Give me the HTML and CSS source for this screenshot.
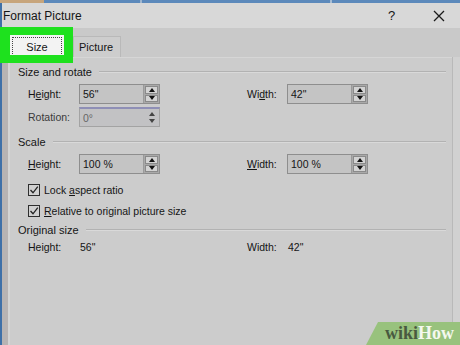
FILE: index.html
```html
<!DOCTYPE html>
<html lang="en">
<head>
<meta charset="UTF-8" />
<title>Format Picture</title>
<link rel="stylesheet" href="styles.css">
</head>
<body>
<div class="screen">
  <div class="backdrop-strip"></div>
  <div class="window">
    <div class="titlebar">
      <span class="title">Format Picture</span>
      <span class="help">?</span>
      <svg class="close" width="12" height="12" viewBox="0 0 12 12">
        <path d="M1 1 L11 11 M11 1 L1 11" stroke="#1a1a1a" stroke-width="1.3" fill="none" />
      </svg>
    </div>

    <div class="tabs">
      <div class="tab active"><span>Size</span></div>
      <div class="tab">Picture</div>
    </div>

    <div class="main">
      <div class="gutter-left"></div>
      <div class="panel">

        <div class="section-head">Size and rotate</div>
        <div class="row">
          <label>H<u>e</u>ight:</label>
          <div class="spin"><div class="spin-text">56"</div><div class="spin-btns"><i class="up"></i><i class="down"></i></div></div>
          <span></span>
          <label>Wi<u>d</u>th:</label>
          <div class="spin"><div class="spin-text">42"</div><div class="spin-btns"><i class="up"></i><i class="down"></i></div></div>
        </div>
        <div class="row row-tight">
          <label class="muted">Rotation:</label>
          <div class="spin disabled"><div class="spin-text">0°</div><div class="spin-btns"><i class="up"></i><i class="down"></i></div></div>
        </div>

        <div class="section-head scale-head">Scale</div>
        <div class="row">
          <label><u>H</u>eight:</label>
          <div class="spin"><div class="spin-text">100 %</div><div class="spin-btns"><i class="up"></i><i class="down"></i></div></div>
          <span></span>
          <label><u>W</u>idth:</label>
          <div class="spin"><div class="spin-text">100 %</div><div class="spin-btns"><i class="up"></i><i class="down"></i></div></div>
        </div>
        <div class="check first">
          <span class="box"><svg width="10" height="10" viewBox="0 0 10 10"><path d="M1.5 5 L4 7.8 L8.8 1.6" stroke="#222" stroke-width="1.3" fill="none" /></svg></span>
          <span>Lock <u>a</u>spect ratio</span>
        </div>
        <div class="check">
          <span class="box"><svg width="10" height="10" viewBox="0 0 10 10"><path d="M1.5 5 L4 7.8 L8.8 1.6" stroke="#222" stroke-width="1.3" fill="none" /></svg></span>
          <span><u>R</u>elative to original picture size</span>
        </div>

        <div class="section-head orig-head">Original size</div>
        <div class="row orig">
          <label>Height:</label>
          <span class="value">56"</span>
          <span></span>
          <label>Width:</label>
          <span class="value">42"</span>
        </div>

      </div>
      <div class="gutter-right"></div>
    </div>
  </div>

  <div class="highlight"></div>
  <div class="wikihow"><span class="wiki">wiki</span><span class="how">How</span></div>
</div>
</body>
</html>
```

FILE: styles.css
```css
/* Reset */
*, *::before, *::after {
  box-sizing: border-box;
  margin: 0; padding: 0;
}
html, body {
  width: 460px;
  height: 345px;
  overflow: hidden;
  font-family: 'Liberation Sans', Arial, sans-serif;
  font-size: 10.5px;
  color: #151515;
}
.screen {
  position: relative;
  width: 460px;
  height: 345px;
  background: #3f70a8;
  display: flex;
  flex-direction: column;
}
.backdrop-strip {
  height: 3px;
  background: linear-gradient(90deg, #c7a57c 0 44px, #5c89bb 44px 140px, #9fb6cf 140px 142px, #5c89bb 142px 330px, #a7bdd4 330px 332px, #5c89bb 332px);
}
.window {
  flex: 1;
  margin-left: 2px;
  display: flex;
  flex-direction: column;
  background: #c9c9c9;
}

/* title bar */
.titlebar {
  height: 25px;
  background: #d8d8d8;
  display: flex;
  align-items: center;
  padding-left: 1px;
}
.title {
  font-size: 12px;
  flex: 1;
}
.help {
  font-size: 13px;
  width: 12px;
  margin-right: 33px;
}
.close {
  margin-right: 15px;
}

/* tabs */
.tabs {
  height: 29px;
  display: flex;
  align-items: flex-end;
  padding-left: 8px;
  background: #c9c9c9;
}
.tab {
  height: 21px;
  padding: 0 7px 0 5px;
  display: flex;
  align-items: center;
  border: 1px solid #b9b9b9;
  border-bottom: none;
  background: #cdcdcd;
  font-size: 11px;
}
.tab.active {
  width: 54px;
  height: 22px;
  padding: 1px;
  background: #f3f3f3;
  border-color: #f3f3f3;
  margin-right: 9px;
}
.tab.active span {
  flex: 1;
  align-self: stretch;
  display: flex;
  align-items: center;
  justify-content: center;
  border: 1px dotted #444;
}

/* body of dialog */
.main {
  flex: 1;
  display: flex;
}
.gutter-left {
  width: 6px;
  background: #b7b3b3;
}
.gutter-right {
  width: 8px;
  background: #d1d1d1;
  border-left: 1px solid #b9b9b9;
}
.panel {
  flex: 1;
  background: #cccccc;
  border-left: 2px solid #d4d4d4;
  border-top: 1px solid #d6d6d6;
  padding: 7px 6px 0 8px;
}
.section-head {
  height: 14px;
  display: flex;
  align-items: center;
  gap: 7px;
  font-size: 11px;
}
.section-head::after {
  content: "";
  flex: 1;
  height: 2px;
  border-top: 1px solid #b2b2b2;
  border-bottom: 1px solid #d9d9d9;
}
.scale-head { margin-top: 8px; }
.orig-head { margin-top: 2px; }

.row {
  display: grid;
  grid-template-columns: 51px 81px 87px 40px 81px;
  align-items: center;
  padding-left: 10px;
  margin-top: 5px;
}
.row-tight { margin-top: 3px; }
.row label { white-space: nowrap; }
.muted { color: #3a3a3a; }

.spin {
  height: 20px;
  display: flex;
  border: 1px solid #8e8e8e;
  background: #c4c4c4;
}
.spin-text {
  flex: 1;
  padding-left: 3px;
  display: flex;
  align-items: center;
  border-right: 1px solid #9a9a9a;
}
.spin-btns {
  width: 15px;
  display: flex;
  flex-direction: column;
  gap: 1px;
  padding: 1px;
  background: #a9a9a9;
}
.spin-btns i {
  flex: 1;
  display: flex;
  align-items: center;
  justify-content: center;
  background: #d3d3d3;
  border: 1px solid #8a8a8a;
}
.spin-btns i::before {
  content: "";
  border-left: 3.5px solid transparent;
  border-right: 3.5px solid transparent;
}
.spin-btns .up::before { border-bottom: 4px solid #111; }
.spin-btns .down::before { border-top: 4px solid #111; }

.spin.disabled {
  border-color: #a3a3a3;
  border-top: 2px solid #8f8fb6;
  background: #c2c2c4;
}
.spin.disabled .spin-text {
  color: #666;
  border-right: none;
}
.spin.disabled .spin-btns {
  background: transparent;
  gap: 0;
}
.spin.disabled .spin-btns i {
  background: transparent;
  border: none;
}
.spin.disabled .spin-btns i::before { border-bottom-color: #444; border-top-color: #444; }

.check {
  display: flex;
  align-items: center;
  gap: 4px;
  height: 20px;
  padding-left: 10px;
  margin-top: 1px;
}
.check.first { margin-top: 6px; }
.check .box {
  width: 12px;
  height: 12px;
  border: 1px solid #2e2e2e;
  background: #d0d0d0;
  display: flex;
  align-items: center;
  justify-content: center;
}

.orig {
  margin-top: 3px;
  height: 14px;
}
.orig .value { padding-left: 1px; }

/* overlays */
.highlight {
  position: absolute;
  left: 0;
  top: 27px;
  width: 73px;
  height: 36px;
  border: solid #1ee11e;
  border-width: 8px 9px 8px 10px;
}
.wikihow {
  position: absolute;
  right: 0;
  bottom: 0;
  width: 94px;
  height: 23px;
  padding: 1px 0 0 19px;
  background: #98c27d;
  clip-path: polygon(12px 0, 100% 0, 100% 100%, 0 100%);
  font-family: 'Liberation Serif', 'Times New Roman', serif;
  font-weight: bold;
  font-size: 18px;
  line-height: 21px;
  white-space: nowrap;
}
.wiki { color: #485940; }
.how { color: #f4f8ef; }
```
